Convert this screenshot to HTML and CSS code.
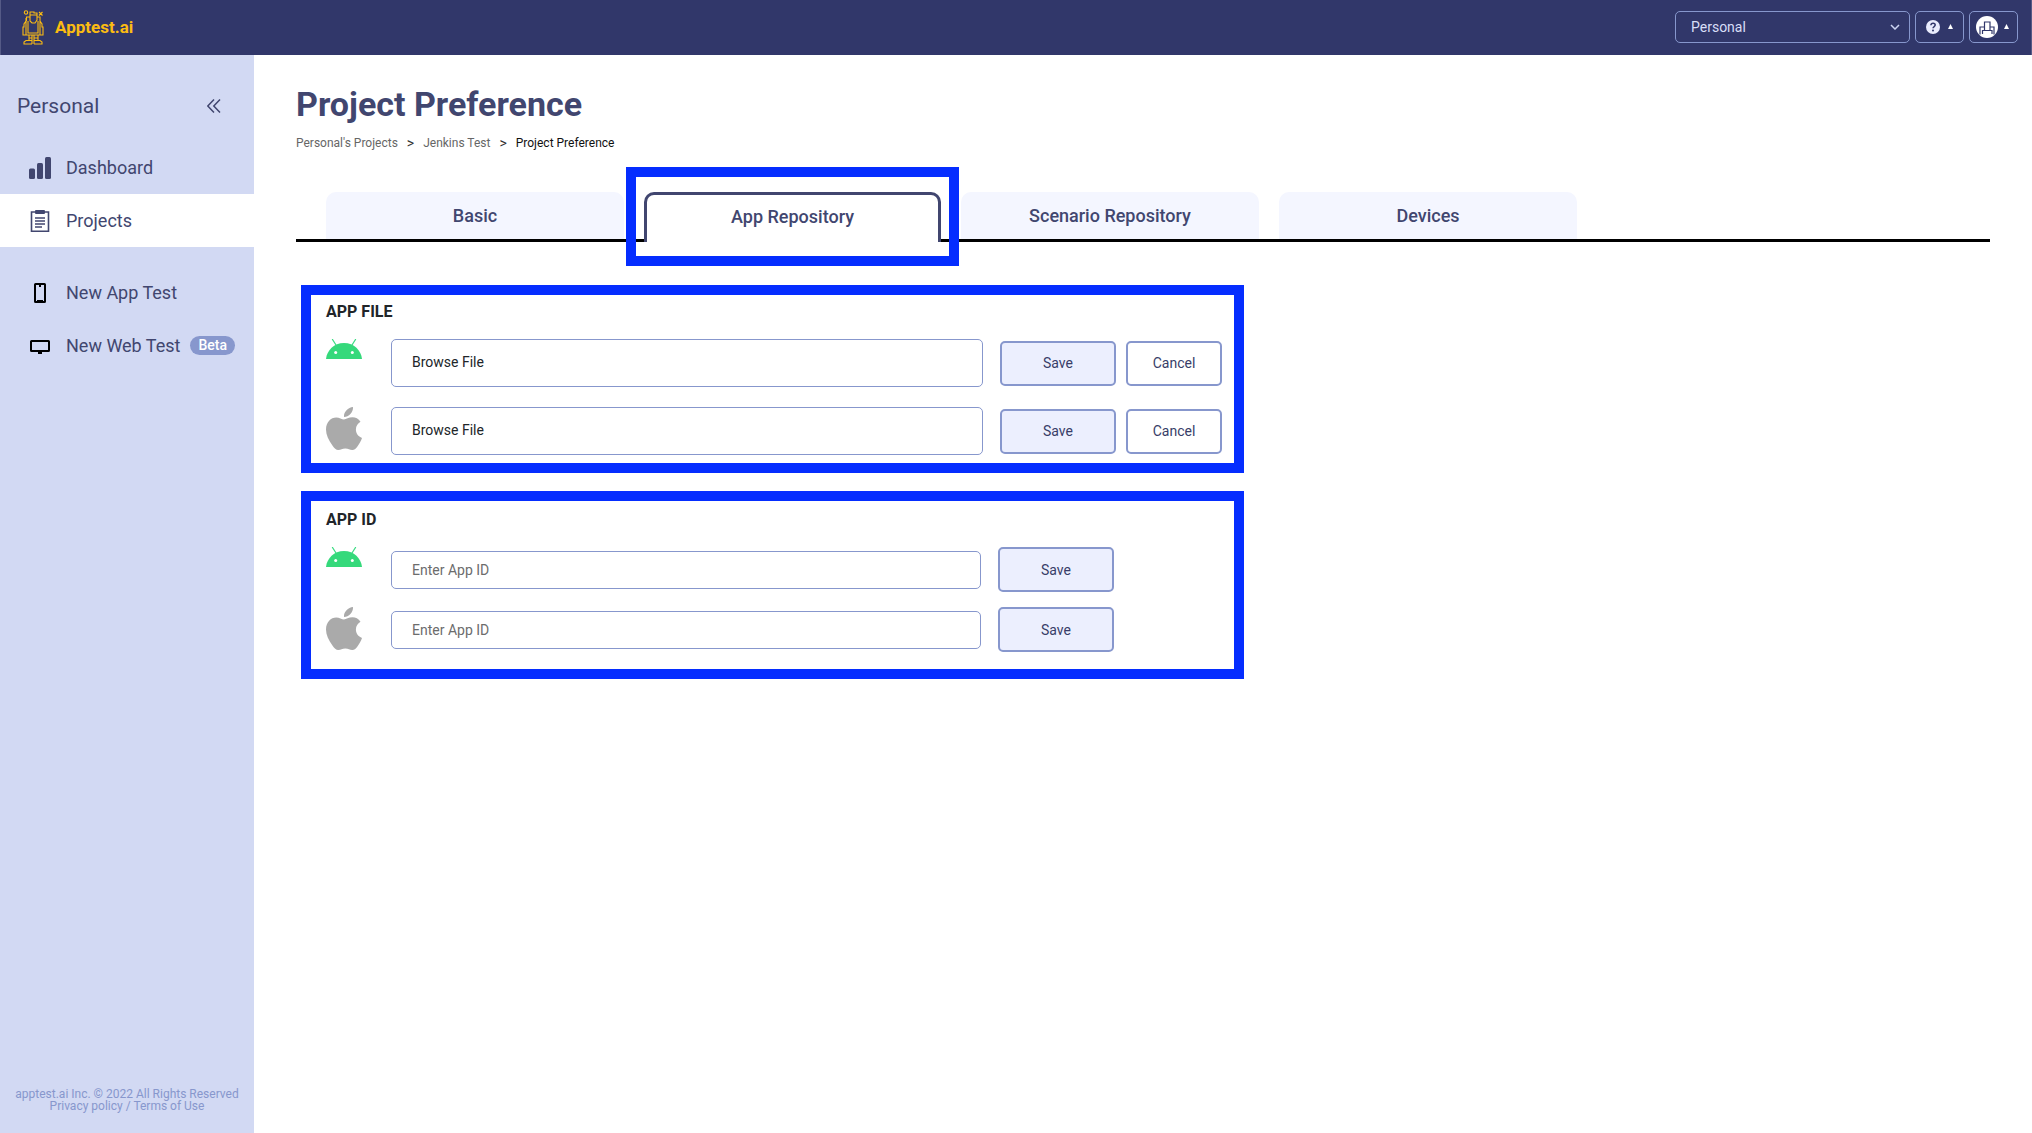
FILE: index.html
```html
<!DOCTYPE html>
<html lang="en">
<head>
<meta charset="utf-8">
<meta name="viewport" content="width=device-width, initial-scale=1">
<title>Project Preference - Apptest.ai</title>
<link rel="stylesheet" href="styles.css">
</head>
<body>
<svg class="sprite" aria-hidden="true">
  <symbol id="android" viewBox="0 0 36 20">
    <path d="M6.500.5 10 6M29.500.5 26 6" stroke="#3ddc84" stroke-width="1.300" fill="none" stroke-linecap="round"/>
    <path d="M0 20C.8 11.500 8 4 18 4s17.200 7.500 18 16z" fill="#35d97b"/>
    <circle cx="9.700" cy="13.500" r="1.500" fill="#fff"/><circle cx="26.300" cy="13.500" r="1.500" fill="#fff"/>
  </symbol>
  <symbol id="apple" viewBox="0 0 36 43">
    <path fill="#aaa" d="M27 0c.4 5.400-4.200 10-9 10C17.500 4.800 22.300.4 27 0zM34.500 14.800c-2.800 1.700-4.600 4.300-4.600 7.800 0 4 2.400 6.900 6.100 8.400-1 3-2.600 5.800-4.400 8.200-1.500 2.100-3 3.800-5.400 3.800-2.600 0-3.600-1.600-6.900-1.600-3.200 0-4.400 1.600-7 1.600-2.300 0-4-2-5.700-4.300C2.500 33.300 0 27.700 0 22.500 0 14.800 5 10.400 10.200 10.400c3.200 0 5.600 2.100 7.800 2.100 2 0 4.900-2.200 8.500-2.200 3 0 6 1.400 8 4.500z"/>
  </symbol>
</svg>
<header class="topbar">
  <a class="brand" href="#">
    <svg class="brand-icon" viewBox="0 0 22 36" fill="none" stroke="#fbbc12" stroke-width="1.100" aria-hidden="true">
      <circle cx="4" cy="3.500" r="1.700"/>
      <path d="M17 3l3.500 3.500M20.500 3 17 6.500M8 7V3h4v1h3v3M4.500 12V8H8V6h7v2h3v4M8 8v4l2 2h3l2-3V7M6 12v12h10V12M4 9v14M18 9v14M4 12l-2 3v3H1v8h3v-3M18 12l2 3v3h1v8h-3v-3M4 23v3h14v-3M7 26v5M10 26v9M12 26v9M16 26v5M7 29h3M12 29h4M10 31.500H4L2 33v2h8M12 31.500h6l2 1.500v2h-8"/>
    </svg>
    <span>Apptest.ai</span>
  </a>
  <div class="topbar-tools">
    <div class="workspace">
      <select aria-label="Workspace"><option>Personal</option></select>
      <svg viewBox="0 0 10 6" aria-hidden="true"><path d="M1 1l4 4 4-4" fill="none" stroke="#cdd5f3" stroke-width="1.500"/></svg>
    </div>
    <button class="tool" aria-label="Help">
      <svg width="14" height="14" viewBox="0 0 14 14" aria-hidden="true"><circle cx="7" cy="7" r="7" fill="#e9ecfd"/><path d="M4.900 5.300C5 3.900 6 3.300 7.100 3.300c1.300 0 2.100.8 2.100 1.800C9.200 6.500 7 6.600 7 8.300" fill="none" stroke="#31376a" stroke-width="1.500"/><circle cx="7" cy="10.400" r="1" fill="#31376a"/></svg>
      <svg width="5" height="5" viewBox="0 0 5 5" aria-hidden="true"><path d="M2.500 0 5 5H0z" fill="#fff"/></svg>
    </button>
    <button class="tool account" aria-label="Account">
      <svg width="22" height="22" viewBox="0 0 22 22" aria-hidden="true"><circle cx="11" cy="11" r="11" fill="#fff"/><path d="M8.500 6h5.500v8.500H8.500zM8.500 11H4v7.500M14 11h4v7.500M8.500 14.500h-2V18M14 14.500h2V18" fill="none" stroke="#31376a" stroke-width="1.200"/></svg>
      <svg width="5" height="5" viewBox="0 0 5 5" aria-hidden="true"><path d="M2.500 0 5 5H0z" fill="#fff"/></svg>
    </button>
  </div>
</header>
<div class="shell">
  <aside class="sidebar">
    <div class="sidebar-head">
      <span>Personal</span>
      <button class="collapse" aria-label="Collapse sidebar"><svg width="14" height="14" viewBox="0 0 14 14" aria-hidden="true"><path d="M7 .5.8 7 7 13.500M13 .5 6.800 7 13 13.500" fill="none" stroke="#41466f" stroke-width="1.500"/></svg></button>
    </div>
    <nav class="menu">
      <a href="#"><svg viewBox="0 0 22 22" fill="#41466f" aria-hidden="true"><rect y="11.500" width="6" height="10.500" rx="1.500"/><rect x="8" y="6" width="6" height="16" rx="1.500"/><rect x="16" width="6" height="22" rx="1.500"/></svg>Dashboard</a>
      <a class="current" href="#" aria-current="page"><svg viewBox="0 0 22 22" aria-hidden="true"><path d="M2.500 2h17v19.200h-17z" fill="none" stroke="#41466f" stroke-width="1.600"/><path d="M6 8h10M6 11h10M6 14h10M6 17h7" stroke="#41466f" stroke-width="1.400"/><rect x="6" width="10" height="4" rx="1" fill="#41466f"/></svg>Projects</a>
    </nav>
    <nav class="menu">
      <a href="#"><svg viewBox="0 0 22 22" aria-hidden="true"><rect x="6" y="2" width="10" height="18" rx=".5" fill="none" stroke="#000" stroke-width="2"/><path d="M10 2h2v3h-2zM8 18h6v2H8z"/></svg>New App Test</a>
      <a href="#"><svg viewBox="0 0 22 22" aria-hidden="true"><rect x="2" y="6" width="18" height="10" rx=".5" fill="none" stroke="#000" stroke-width="2"/><path d="M7 16h8v1H7zM9 17h4v2H9z"/></svg>New Web Test<span class="beta">Beta</span></a>
    </nav>
    <footer class="legal">apptest.ai Inc. © 2022 All Rights Reserved<br><a href="#">Privacy policy</a> / <a href="#">Terms of Use</a></footer>
  </aside>
  <main class="content">
    <h1>Project Preference</h1>
    <nav class="crumbs" aria-label="Breadcrumb"><a href="#">Personal's Projects</a><span class="sep">&gt;</span><a href="#">Jenkins Test</a><span class="sep">&gt;</span><span class="here">Project Preference</span></nav>
    <nav class="tabs" aria-label="Preference sections">
      <a class="tab" href="#">Basic</a>
      <a class="tab active" href="#" aria-current="true">App Repository</a>
      <a class="tab" href="#">Scenario Repository</a>
      <a class="tab" href="#">Devices</a>
    </nav>
    <section class="panel files">
      <h2>APP FILE</h2>
      <div class="row">
        <svg class="os android"><use href="#android"/></svg>
        <label class="field">Browse File<input type="file" aria-label="Android app file"></label>
        <button class="btn save">Save</button><button class="btn cancel">Cancel</button>
      </div>
      <div class="row">
        <svg class="os apple"><use href="#apple"/></svg>
        <label class="field">Browse File<input type="file" aria-label="iOS app file"></label>
        <button class="btn save">Save</button><button class="btn cancel">Cancel</button>
      </div>
    </section>
    <section class="panel ids">
      <h2>APP ID</h2>
      <div class="row">
        <svg class="os android"><use href="#android"/></svg>
        <input class="field" type="text" placeholder="Enter App ID" aria-label="Android app ID">
        <button class="btn save">Save</button>
      </div>
      <div class="row">
        <svg class="os apple"><use href="#apple"/></svg>
        <input class="field" type="text" placeholder="Enter App ID" aria-label="iOS app ID">
        <button class="btn save">Save</button>
      </div>
    </section>
  </main>
</div>
</body>
</html>
```
FILE: styles.css
```css
:root {
  --navy: #31376a;
  --ink: #41466f;
  --line: #8797cd;
  --mark: #052dff;
}
* { box-sizing: border-box; }
body {
  margin: 0;
  min-height: 100vh;
  display: flex;
  flex-direction: column;
  font-family: Roboto, "Liberation Sans", sans-serif;
  font-size: 14px;
  color: #212529;
  background: #fff;
}
a { color: inherit; text-decoration: none; }
button, input, select { font: inherit; color: inherit; margin: 0; }
button { cursor: pointer; }
.sprite { display: none; }

.topbar {
  height: 55px;
  display: flex;
  align-items: center;
  justify-content: space-between;
  padding: 0 13px 2px 21px;
  background: var(--navy);
  border: solid #555a86;
  border-width: 0 1px;
}
.brand {
  display: flex;
  align-items: center;
  gap: 11px;
  color: #fbbc12;
  font-size: 17px;
  font-weight: 700;
}
.brand-icon { width: 22px; height: 36px; }
.topbar-tools { display: flex; gap: 5px; color: #d8def7; }
.workspace { display: grid; width: 235px; align-items: center; }
.workspace > * { grid-area: 1 / 1; }
.workspace select {
  height: 32px;
  padding: 0 15px;
  appearance: none;
  background: none;
  border: 1px solid var(--line);
  border-radius: 5px;
}
.workspace svg { width: 10px; height: 6px; justify-self: end; margin-right: 10px; pointer-events: none; }
.tool {
  width: 49px;
  height: 32px;
  padding: 0;
  display: flex;
  align-items: center;
  justify-content: center;
  gap: 8px;
  background: none;
  border: 1px solid var(--line);
  border-radius: 5px;
}
.account { gap: 6px; padding-right: 3px; }

.shell { flex: 1; display: flex; }
.sidebar {
  width: 254px;
  flex: none;
  display: flex;
  flex-direction: column;
  background: #d2d9f3;
  color: var(--ink);
}
.sidebar-head {
  display: flex;
  align-items: center;
  justify-content: space-between;
  margin-bottom: 20px;
  padding: 36px 33px 0 17px;
  height: 66px;
  font-size: 21px;
}
.collapse { display: flex; padding: 0; border: 0; background: none; }
.menu { display: flex; flex-direction: column; font-size: 18px; }
.menu + .menu { margin-top: 19px; }
.menu a { height: 53px; display: flex; align-items: center; padding-left: 29px; }
.menu svg { width: 22px; height: 22px; margin-right: 15px; }
.menu .current { background: #fff; }
.beta {
  margin-left: 10px;
  padding: 0 8px;
  border-radius: 10px;
  background: #8797cd;
  color: #fff;
  font-size: 14px;
  font-weight: 500;
  line-height: 19px;
}
.legal { margin-top: auto; padding-bottom: 21px; text-align: center; color: var(--line); font-size: 12px; line-height: 12px; }

.content { flex: 1; min-width: 0; padding: 27px 42px 40px; }
h1 { margin: 0; font-size: 34px; line-height: 44px; color: var(--ink); }
.crumbs { display: flex; gap: 9px; margin-top: 9px; font-size: 12px; line-height: 16px; color: #666; }
.crumbs .sep { font-size: 14px; color: #333; }
.crumbs .here { color: #111; }
.tabs {
  display: flex;
  gap: 20px;
  margin-top: 41px;
  padding-left: 30px;
  border-bottom: 3px solid #000;
}
.tab {
  width: 298px;
  height: 47px;
  display: flex;
  align-items: center;
  justify-content: center;
  border-radius: 10px 10px 0 0;
  background: #f4f6ff;
  color: var(--ink);
  font-size: 18px;
  font-weight: 500;
}
.tab.active {
  position: relative;
  width: 297px;
  height: 50px;
  margin-bottom: -3px;
  padding-bottom: 4px;
  border: 3px solid var(--ink);
  border-bottom: 0;
  background: #fff;
}
.tab.active::after {
  content: "";
  position: absolute;
  inset: -28px -21px -24px;
  border: 10px solid var(--mark);
}
.panel {
  max-width: 943px;
  min-height: 188px;
  margin: 43px 0 0 5px;
  border: 10px solid var(--mark);
}
.panel h2 { margin: 0; font-size: 16px; line-height: 20px; }
.row { display: flex; }
.files { padding: 7px 12px 8px 15px; }
.files h2 { margin-bottom: 17px; }
.ids { margin-top: 18px; padding: 9px 120px 17px 15px; }
.ids h2 { margin-bottom: 17px; }
.files .row + .row { margin-top: 20px; }
.ids .row + .row { margin-top: 15px; }
.os { width: 36px; margin-right: 29px; flex: none; }
.android { height: 20px; }
.apple { height: 43px; }
.field {
  flex: 1;
  min-width: 0;
  height: 48px;
  padding: 0 20px;
  border: 1px solid var(--line);
  border-radius: 5px;
  line-height: 44px;
  background: #fff;
}
.ids .field { height: 38px; line-height: 36px; align-self: center; }
.field::placeholder { color: #6c6c6c; opacity: 1; }
.field input { position: absolute; width: 1px; height: 1px; opacity: 0; }
.btn {
  height: 45px;
  margin-left: 17px;
  padding: 0;
  align-self: center;
  border: 2px solid var(--line);
  border-radius: 5px;
  color: #383d68;
}
.save { width: 116px; background: #eceffe; }
.cancel { width: 96px; margin-left: 10px; background: #fff; }
```
